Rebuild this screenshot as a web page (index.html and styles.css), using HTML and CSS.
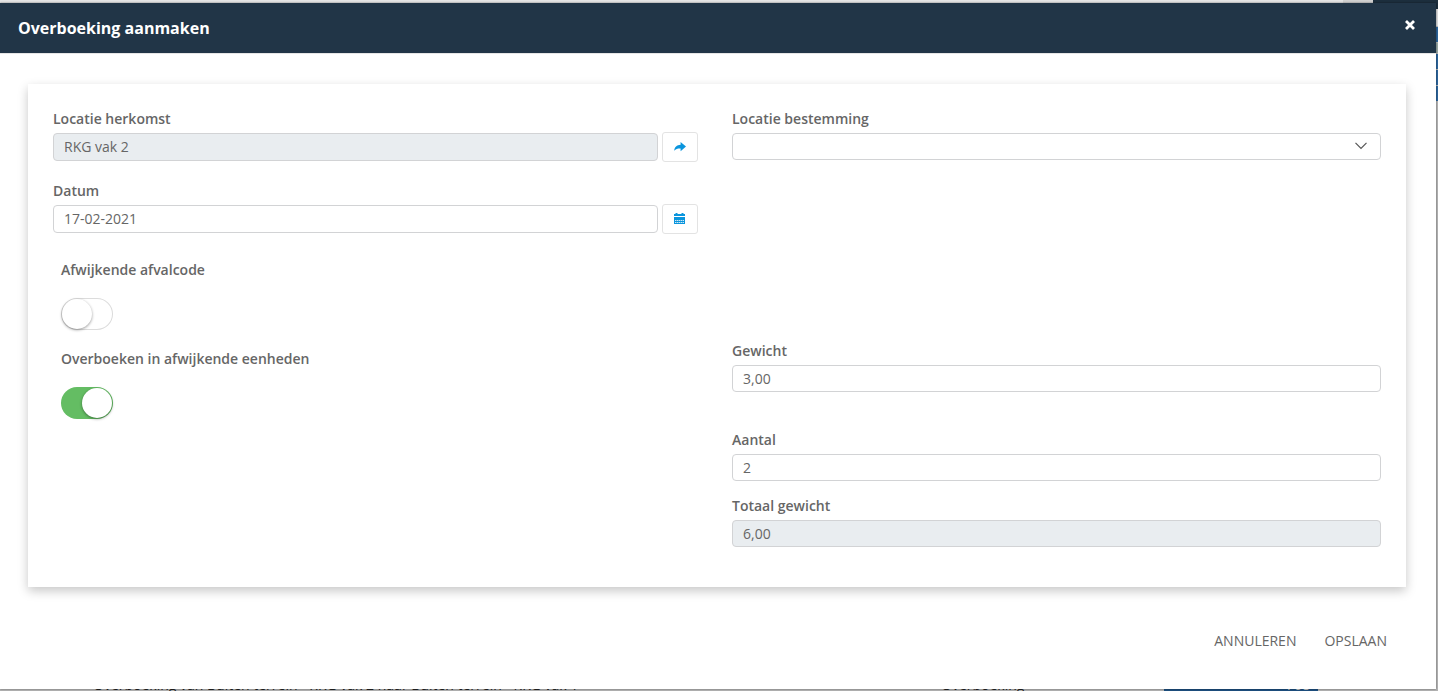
FILE: index.html
```html
<!DOCTYPE html>
<html lang="nl">
<head>
<meta charset="utf-8">
<title>Overboeking aanmaken</title>
<link rel="stylesheet" href="styles.css">
</head>
<body>
<div class="backdrop" aria-hidden="true">
  <div class="backdrop-top">
    <span class="backdrop-bar"></span>
    <span class="backdrop-gap"></span>
    <span class="backdrop-nav"></span>
  </div>
  <div class="backdrop-side">
    <span class="side-light"></span>
    <span class="side-tile"></span>
    <span class="side-photo"></span>
    <span class="side-tile"></span>
    <span class="side-tile"></span>
    <span class="side-tile"></span>
  </div>
  <div class="backdrop-row">
    <span class="row-text">Overboeking van Buiten terrein - RKG vak 2 naar Buiten terrein - RKG vak 1</span>
    <span class="row-type">Overboeking</span>
    <span class="row-badge">768</span>
  </div>
</div>
<main class="dialog" role="dialog" aria-labelledby="dialog-title">
  <header class="dialog-header">
    <h1 class="dialog-title" id="dialog-title">Overboeking aanmaken</h1>
    <button class="close" type="button" aria-label="Sluiten">
      <svg width="10" height="10" viewBox="0 0 10 10"><path d="M1 1l8 8M9 1l-8 8" stroke="#fff" stroke-width="2.8"/></svg>
    </button>
  </header>
  <form class="dialog-form">
    <div class="card">
      <div class="field field-left">
        <label for="herkomst">Locatie herkomst</label>
        <div class="input-group">
          <input class="control" id="herkomst" type="text" value="RKG vak 2" readonly>
          <button class="icon-button" type="button" aria-label="Ga naar locatie">
            <svg width="12" height="10" viewBox="0 0 12 10"><path d="M6.6 0L12 4.6 6.6 9.2V6.4C3.8 6.3 1.8 6.8 0.2 8.8 0.5 5 2.8 2.8 6.6 2.7z" fill="#0a95dd"/></svg>
          </button>
        </div>
      </div>
      <div class="field field-right">
        <label for="bestemming">Locatie bestemming</label>
        <div class="select-wrap">
          <select class="control" id="bestemming"><option value=""></option></select>
          <svg class="chevron" width="14" height="8" viewBox="0 0 14 8"><path d="M1.5 0.8L7 6.3 12.5 0.8" fill="none" stroke="#555" stroke-width="1.2"/></svg>
        </div>
      </div>
      <div class="field field-left">
        <label for="datum">Datum</label>
        <div class="input-group">
          <input class="control" id="datum" type="text" value="17-02-2021">
          <button class="icon-button" type="button" aria-label="Kies datum">
            <svg width="12" height="12" viewBox="0 0 12 12"><path d="M0 1h1.5V0h2v1h4V0h2v1H11v2H0zM0 4h11v7H0z" fill="#0a95dd"/><path d="M1 7.5h9M1 9.5h9" stroke="#fff" stroke-width="0.8" stroke-dasharray="1.4 0.5"/></svg>
          </button>
        </div>
      </div>
      <div class="toggle-field">
        <label for="afvalcode">Afwijkende afvalcode</label>
        <input class="toggle" id="afvalcode" type="checkbox" role="switch">
      </div>
      <div class="toggle-field">
        <label for="eenheden">Overboeken in afwijkende eenheden</label>
        <input class="toggle" id="eenheden" type="checkbox" role="switch" checked>
      </div>
      <div class="field field-right">
        <label for="gewicht">Gewicht</label>
        <input class="control" id="gewicht" type="text" value="3,00">
      </div>
      <div class="field field-right">
        <label for="aantal">Aantal</label>
        <input class="control" id="aantal" type="text" value="2">
      </div>
      <div class="field field-right">
        <label for="totaal">Totaal gewicht</label>
        <input class="control" id="totaal" type="text" value="6,00" readonly>
      </div>
    </div>
    <footer class="actions">
      <button class="action" type="button">ANNULEREN</button>
      <button class="action" type="submit">OPSLAAN</button>
    </footer>
  </form>
</main>
</body>
</html>
```
FILE: styles.css
```css
* {
  box-sizing: border-box;
}

body {
  margin: 0;
  min-height: 100vh;
  display: flex;
  padding: 3px 2px 2px 0;
  overflow: hidden;
  background: #b4b4b4;
  color: #666;
  font: 14px/20px "Open Sans", sans-serif;
}

button,
input,
select {
  font: inherit;
  color: inherit;
}

/* Page visible around the edges of the dialog */
.backdrop {
  position: absolute;
  inset: 0;
  display: flex;
  flex-direction: column;
  overflow: hidden;
  color: #222;
}

.backdrop-top {
  display: flex;
  height: 9px;
}

.backdrop-bar {
  flex: 1;
  background: #e6e6e6;
}

.backdrop-gap {
  width: 30px;
  background: #d2d2d2;
}

.backdrop-nav {
  width: 65px;
  background: #1d2f3e;
}

.backdrop-side {
  flex: 1;
  align-self: flex-end;
  display: flex;
  flex-direction: column;
  gap: 1px;
  width: 2px;
}

.side-light {
  height: 17px;
  background: #ddd;
}

.side-tile {
  height: 15px;
  background: #2c659c;
}

.side-photo {
  height: 10px;
  background: #9aa9a5;
}

.backdrop-row {
  display: flex;
  height: 16px;
  padding-left: 93px;
  white-space: nowrap;
}

.row-text {
  width: 848px;
}

.row-type {
  width: 223px;
}

.row-badge {
  width: 154px;
  padding-right: 8px;
  background: #1d4f80;
  color: #ccc;
  text-align: right;
}

.dialog {
  position: relative;
  flex: 1;
  display: flex;
  flex-direction: column;
  background: #fff;
  box-shadow: 0 0 2px rgba(0, 0, 0, 0.5);
}

.dialog-header {
  display: flex;
  align-items: center;
  justify-content: space-between;
  height: 50px;
  padding: 0 18px;
  background: #213547;
  color: #fff;
  box-shadow: 0 1px #e5e5e5;
}

.dialog-title {
  margin: 0;
  font-size: 16px;
  line-height: 24px;
  font-weight: 700;
}

.close {
  display: flex;
  padding: 3px;
  margin-bottom: 6px;
  border: 0;
  background: none;
}

.dialog-form {
  flex: 1;
  display: flex;
  flex-direction: column;
  padding: 31px 30px 0 28px;
}

.card {
  display: grid;
  grid-template-columns: 1fr 1fr;
  grid-template-rows:
    minmax(72px, auto) minmax(71px, auto) minmax(89px, auto)
    minmax(89px, auto) minmax(66px, auto) auto;
  column-gap: 30px;
  padding: 25px 25px 40px;
  background: #fff;
  box-shadow: 0 4px 10px rgba(0, 0, 0, 0.22);
}

.card label {
  font-weight: 600;
}

.field {
  display: flex;
  flex-direction: column;
}

.field-left {
  grid-column: 1;
  gap: 3px;
  padding-right: 4px;
}

.field-right {
  grid-column: 2;
  gap: 4px;
}

.control {
  width: 100%;
  min-width: 0;
  height: 27px;
  padding: 0 10px;
  border: 1px solid #d2d3d5;
  border-radius: 4px;
  background: #fff;
}

.input-group {
  display: flex;
  align-items: center;
  gap: 4px;
}

.input-group .control {
  flex: 1;
  height: 28px;
  padding-bottom: 2px;
}

.control:read-only:not(select) {
  background: #e9edf0;
}

.icon-button {
  display: flex;
  align-items: center;
  justify-content: center;
  width: 36px;
  height: 30px;
  padding: 0;
  border: 1px solid #e3e3e3;
  border-radius: 3px;
  background: #fff;
}

.select-wrap {
  display: grid;
  align-items: center;
}

.select-wrap > * {
  grid-area: 1 / 1;
}

.select-wrap select {
  appearance: none;
}

.chevron {
  justify-self: end;
  margin: 0 13px 2px 0;
  pointer-events: none;
}

.toggle-field {
  grid-column: 1;
  display: flex;
  flex-direction: column;
  align-items: flex-start;
  gap: 18px;
  padding: 8px;
}

.toggle {
  appearance: none;
  display: flex;
  width: 52px;
  height: 32px;
  margin: 0;
  padding: 1px;
  border-radius: 16px;
  background: #fff;
  box-shadow: inset 0 0 0 1px #dcdcdc;
}

.toggle::before {
  content: "";
  width: 30px;
  height: 30px;
  border-radius: 50%;
  background: #fff;
  box-shadow: 0 1px 3px rgba(0, 0, 0, 0.4);
}

.toggle:checked {
  justify-content: flex-end;
  background: #64bd63;
  box-shadow: none;
}

.actions {
  display: flex;
  justify-content: flex-end;
  gap: 28px;
  padding: 44px 19px 38px 0;
}

.action {
  padding: 0;
  border: 0;
  background: none;
}
```
